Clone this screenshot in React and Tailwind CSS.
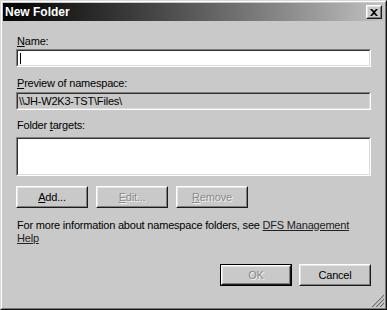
import React from "react";

function Sunken({ className = "", inner = "bg-white", children }) {
  return (
    <div className={`border border-t-[#808080] border-l-[#808080] border-b-white border-r-white ${className}`}>
      <div className={`h-full w-full border border-t-[#303030] border-l-[#303030] border-b-[#dcdcdc] border-r-[#dcdcdc] ${inner}`}>
        {children}
      </div>
    </div>
  );
}

function Btn({ children, disabled, isDefault, className = "" }) {
  const body = (
    <div className="h-full w-full border border-t-white border-l-white border-b-[#1a1a1a] border-r-[#1a1a1a]">
      <div className="flex h-full w-full items-center justify-center border border-t-[#e4e4e4] border-l-[#e4e4e4] border-b-[#7e7e7e] border-r-[#7e7e7e]">
        <span
          className={
            disabled
              ? "text-[#8a8a8a] [text-shadow:1px_1px_0_#f4f4f4]"
              : "text-black"
          }
        >
          {children}
        </span>
      </div>
    </div>
  );
  return (
    <div className={`h-[22px] w-[72px] ${isDefault ? "border border-black" : ""} ${className}`}>
      {body}
    </div>
  );
}

export default function App() {
  return (
    <div
      className="relative h-[310px] w-[387px] border border-t-[#d8d8d8] border-l-[#d8d8d8] border-b-[#111] border-r-[#111] text-[11px] leading-[13px] tracking-[-0.2px] text-black"
      style={{ fontFamily: '"Liberation Sans", Arial, sans-serif' }}
    >
      <div className="flex h-full w-full flex-col border border-t-white border-l-white border-b-[#7a7a7a] border-r-[#7a7a7a] bg-[#c9c9c9] p-px">
        {/* Title bar */}
        <div className="flex h-[18px] items-center justify-between bg-linear-to-r from-[#050505] via-[#5a5a5a] to-[#c2c2c2] pl-[2px] pr-[2px]">
          <span className="text-[12px] font-bold tracking-normal text-white">New Folder</span>
          <div className="h-[14px] w-[16px] border border-t-white border-l-white border-b-[#1a1a1a] border-r-[#1a1a1a] bg-[#c9c9c9]">
            <div className="flex h-full w-full items-center justify-center border border-t-[#e4e4e4] border-l-[#e4e4e4] border-b-[#7e7e7e] border-r-[#7e7e7e]">
              <svg width="8" height="7" viewBox="0 0 8 7">
                <path d="M0 0h2l2 2 2-2h2L5 3.5 8 7H6L4 5 2 7H0l3-3.5z" fill="#000" />
              </svg>
            </div>
          </div>
        </div>

        {/* Content */}
        <div className="flex flex-1 flex-col px-[13px] pt-[14px]">
          <div className="h-[13px] pl-px">
            <span className="underline underline-offset-1">N</span>ame:
          </div>
          <Sunken className="mt-px h-[18px]">
            <div className="ml-[2px] mt-[2px] h-[11px] w-px bg-black" />
          </Sunken>

          <div className="mt-[10px] h-[13px] pl-px">
            <span className="underline underline-offset-1">P</span>review of namespace:
          </div>
          <Sunken className="mt-[2px] h-[18px]" inner="bg-[#c9c9c9]">
            <div className="pl-px pt-px">\\JH-W2K3-TST\Files\</div>
          </Sunken>

          <div className="mt-[9px] h-[13px] pl-px">
            Folder <span className="underline underline-offset-1">t</span>argets:
          </div>
          <Sunken className="mt-[5px] h-[39px]" />

          <div className="mt-[10px] flex gap-[8px]">
            <Btn>
              <span className="underline underline-offset-1">A</span>dd...
            </Btn>
            <Btn disabled>
              <span className="underline underline-offset-1">E</span>dit...
            </Btn>
            <Btn disabled>
              <span className="underline underline-offset-1">R</span>emove
            </Btn>
          </div>

          <p className="mt-[11px] pl-px">
            For more information about namespace folders, see{" "}
            <span className="text-[#222] underline underline-offset-1">DFS Management Help</span>
          </p>

          <div className="mt-[19px] flex justify-end gap-[7px]">
            <Btn disabled isDefault>OK</Btn>
            <Btn>Cancel</Btn>
          </div>
        </div>
      </div>

      {/* Resize grip */}
      <svg className="absolute bottom-[2px] right-[2px]" width="13" height="13" viewBox="0 0 13 13">
        <path d="M12 1 L1 12 M12 5 L5 12 M12 9 L9 12" stroke="#ffffff" strokeWidth="1" />
        <path d="M13 1 L1 13 M13 5 L5 13 M13 9 L9 13" stroke="#6a6a6a" strokeWidth="1.2" />
      </svg>
    </div>
  );
}
